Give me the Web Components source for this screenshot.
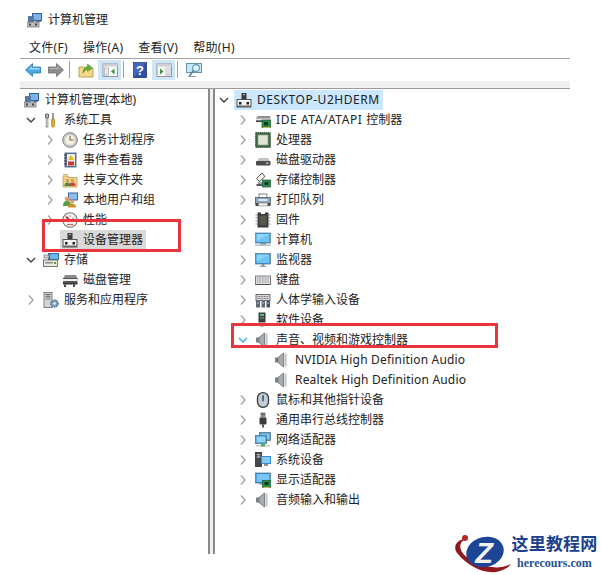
<!DOCTYPE html>
<html lang="zh">
<head>
<meta charset="utf-8">
<title>计算机管理</title>
<style>
  html, body { margin: 0; background: #fff; }
  body { font: 12px/20px "Noto Sans", "Noto Sans CJK SC", sans-serif; color: #222; }
</style>
</head>
<body>
<mmc-app>
  <mmc-title icon="mgmt">计算机管理</mmc-title>
  <mmc-menu>
    <span>文件(F)</span><span>操作(A)</span><span>查看(V)</span><span>帮助(H)</span>
  </mmc-menu>
  <mmc-toolbar>
    <tool-button icon="back"></tool-button>
    <tool-button icon="forward"></tool-button>
    <tool-sep></tool-sep>
    <tool-button icon="up"></tool-button>
    <tool-button icon="tree" active style="margin-left:1px"></tool-button>
    <tool-sep></tool-sep>
    <tool-button icon="help"></tool-button>
    <tool-button icon="actions" active style="margin-left:1px"></tool-button>
    <tool-sep></tool-sep>
    <tool-button icon="screen"></tool-button>
  </mmc-toolbar>
  <mmc-split>
    <tree-pane slot="left" style="padding-left:4px">
      <tree-row level="0" state="none" icon="mgmt">计算机管理(本地)</tree-row>
      <tree-row level="1" state="open" icon="tools">系统工具</tree-row>
      <tree-row level="2" icon="clock">任务计划程序</tree-row>
      <tree-row level="2" icon="events">事件查看器</tree-row>
      <tree-row level="2" icon="share">共享文件夹</tree-row>
      <tree-row level="2" icon="users">本地用户和组</tree-row>
      <tree-row level="2" icon="perf">性能</tree-row>
      <tree-row level="2" state="none" icon="device" selected="gray">设备管理器</tree-row>
      <tree-row level="1" state="open" icon="storage">存储</tree-row>
      <tree-row level="2" state="none" icon="disk2">磁盘管理</tree-row>
      <tree-row level="1" icon="services">服务和应用程序</tree-row>
    </tree-pane>
    <tree-pane slot="right" style="padding-left:2px">
      <tree-row level="1" state="open" icon="device" selected="blue"><span style="letter-spacing:.53px">DESKTOP-U2HDERM</span></tree-row>
      <tree-row level="2" icon="ide"><span style="letter-spacing:.57px">IDE ATA/ATAPI </span>控制器</tree-row>
      <tree-row level="2" icon="cpu">处理器</tree-row>
      <tree-row level="2" icon="drive">磁盘驱动器</tree-row>
      <tree-row level="2" icon="storctl">存储控制器</tree-row>
      <tree-row level="2" icon="printer">打印队列</tree-row>
      <tree-row level="2" icon="firmware">固件</tree-row>
      <tree-row level="2" icon="laptop">计算机</tree-row>
      <tree-row level="2" icon="monitor">监视器</tree-row>
      <tree-row level="2" icon="keyboard">键盘</tree-row>
      <tree-row level="2" icon="hid">人体学输入设备</tree-row>
      <tree-row level="2" icon="software">软件设备</tree-row>
      <tree-row level="2" state="hot" icon="speaker">声音、视频和游戏控制器</tree-row>
      <tree-row level="3" state="none" icon="speaker"><span style="letter-spacing:.18px">NVIDIA High Definition Audio</span></tree-row>
      <tree-row level="3" state="none" icon="speaker"><span style="letter-spacing:.18px">Realtek High Definition Audio</span></tree-row>
      <tree-row level="2" icon="mouse">鼠标和其他指针设备</tree-row>
      <tree-row level="2" icon="usb">通用串行总线控制器</tree-row>
      <tree-row level="2" icon="network">网络适配器</tree-row>
      <tree-row level="2" icon="system">系统设备</tree-row>
      <tree-row level="2" icon="display">显示适配器</tree-row>
      <tree-row level="2" icon="speaker">音频输入和输出</tree-row>
    </tree-pane>
  </mmc-split>
  <red-box style="left:42px;top:219px;width:139px;height:33px"></red-box>
  <red-box style="left:231px;top:323px;width:267px;height:25px"></red-box>
  <site-mark></site-mark>
</mmc-app>

<script>
// all icons share a 16x16 box
const ICONS = {
  mgmt: `<rect x="5" y="1" width="10" height="8" fill="#2f5f9e"/><rect x="6" y="2" width="8" height="6" fill="#7fb2e8"/><rect x="1" y="4" width="6" height="6" fill="#56789e"/><rect x="0" y="10" width="12" height="5" fill="#b9bcc0" stroke="#6a6d70" stroke-width=".7"/><rect x="2" y="11.5" width="2" height="2" fill="#444"/><rect x="8" y="11.5" width="2" height="2" fill="#444"/><rect x="9" y="9" width="5" height="1" fill="#777"/>`,
  tools: `<path d="M4 1v3.500M2.500 2v3l1.500 1.500 1.500-1.500V2" fill="none" stroke="#666" stroke-width="1.100"/><rect x="3.200" y="6" width="1.700" height="9" fill="#fff" stroke="#777" stroke-width=".8"/><rect x="9" y="1" width="2" height="6" fill="#9a9a9a"/><rect x="8.500" y="7" width="3" height="8" rx="1" fill="#e8a820" stroke="#a87510" stroke-width=".6"/>`,
  clock: `<circle cx="8" cy="8" r="7.300" fill="#d8d8d2" stroke="#777" stroke-width="1"/><circle cx="8" cy="8" r="5.400" fill="#f4f1e2" stroke="#aaa" stroke-width=".6"/><path d="M8 4v4h3.500" fill="none" stroke="#7a6a3a" stroke-width="1.100"/>`,
  events: `<rect x="3" y="1" width="11" height="14" fill="#5a7fa8" stroke="#3d5a7a" stroke-width=".8"/><rect x="5" y="2" width="8" height="12" fill="#f0ede0"/><path d="M2 3h3M2 6h3M2 9h3M2 12h3" stroke="#444" stroke-width="1"/><path d="M9 3l3 5H6z" fill="#e8b820"/><rect x="6" y="9.500" width="6" height="4" fill="#c83c30"/>`,
  share: `<path d="M1 4h5l1 1.500h8V15H1z" fill="#f0d78a" stroke="#b89a4a" stroke-width=".8"/><path d="M1 2.500h4l1 1" fill="none" stroke="#b89a4a" stroke-width=".8"/><circle cx="5.500" cy="8.500" r="1.800" fill="#d89a60"/><path d="M2.500 14c0-3 1.500-3.500 3-3.500s3 .5 3 3.500z" fill="#4a8a4a"/><circle cx="10.500" cy="8.500" r="1.800" fill="#d89a60"/><path d="M7.500 14c0-3 1.500-3.500 3-3.500s3 .5 3 3.500z" fill="#c04a40"/>`,
  users: `<rect x="6" y="0.500" width="10" height="8" fill="#3a639a"/><rect x="7" y="1.500" width="8" height="6" fill="#8fbdea"/><circle cx="5" cy="7" r="2.300" fill="#d8a070"/><path d="M1 14c0-4 2-5 4-5s4 1 4 5z" fill="#5a9a40"/><circle cx="10" cy="9.500" r="2.100" fill="#d8a070"/><path d="M6 15.500c0-3 2-3.800 4-3.800s4 .8 4 3.800z" fill="#c8902a"/>`,
  perf: `<circle cx="8" cy="8" r="7.200" fill="#f6f4f0" stroke="#777" stroke-width="1.100"/><path d="M3.500 5.500l2.500 1.500M12.500 5.500L10 7M8 3v2" stroke="#999" stroke-width=".9"/><path d="M4 4.500L9 9" stroke="#c8201c" stroke-width="1.400"/><path d="M5 12.500h6" stroke="#c86a60" stroke-width="1.300"/>`,
  device: `<rect x="5.500" y="1" width="5" height="6.500" fill="#3c3c3c"/><rect x="7" y="2" width="2" height="1.200" fill="#aaa"/><rect x="1" y="7.500" width="14" height="7.500" fill="#f4f4f4" stroke="#555" stroke-width="1"/><rect x="3" y="10" width="2.500" height="2.500" fill="#222"/><rect x="10.500" y="10" width="2.500" height="2.500" fill="#222"/><rect x="1" y="13.500" width="14" height="1.500" fill="#666"/>`,
  disk2: `<path d="M1 7l2-4h11l1.500 4z" fill="#8a8a8a"/><rect x="1" y="6" width="14.500" height="5" fill="#555"/><rect x="1" y="7" width="14.500" height="2" fill="#f0f0f0"/><rect x="1" y="11" width="14.500" height="1.500" fill="#333"/><rect x="2" y="12.500" width="2" height="2.500" fill="#444"/><rect x="11" y="12.500" width="2" height="2.500" fill="#444"/>`,
  storage: `<rect x="5" y="1" width="11" height="7" fill="#2f6ea8"/><rect x="7" y="2" width="8" height="5" fill="#6fb8e8"/><rect x="1" y="3" width="5" height="3" fill="#d0d4d8" stroke="#666" stroke-width=".6"/><rect x="0.500" y="8" width="14" height="6.500" fill="#eceae0" stroke="#6a6a60" stroke-width=".9"/><rect x="2" y="10" width="8" height="1.500" fill="#8a8a80"/><rect x="11" y="10" width="2" height="2" fill="#58a040"/>`,
  services: `<rect x="1" y="0.500" width="8" height="15" fill="#d2d4d6" stroke="#777" stroke-width=".9"/><rect x="2.500" y="2" width="5" height="1.200" fill="#666"/><rect x="2.500" y="4.200" width="5" height="1.200" fill="#666"/><rect x="2.500" y="6.400" width="5" height="1.200" fill="#888"/><circle cx="11.500" cy="11.500" r="3.600" fill="#7f9fbe" stroke="#51708f" stroke-width="1.300" stroke-dasharray="1.500 .8"/><circle cx="11.500" cy="11.500" r="1.300" fill="#e8eef4"/>`,
  ide: `<path d="M1 6l2-2h12l.5 2v3H1z" fill="#8f8f8f"/><rect x="1" y="6.500" width="14.500" height="2" fill="#e8e8e8"/><rect x="1" y="8.500" width="9" height="1.500" fill="#444"/><rect x="7" y="8" width="8.500" height="7.500" fill="#2d8a50" stroke="#1a5a30" stroke-width=".7"/><rect x="9" y="10" width="4" height="3.500" fill="#153a22"/><path d="M8 15.500h7" stroke="#d8b840" stroke-width="1"/>`,
  cpu: `<rect x="0.700" y="0.700" width="14.600" height="14.600" fill="#3f6a42" stroke="#2e4a30" stroke-width="1" stroke-dasharray="1.400 .6"/><rect x="3" y="3" width="10" height="10" fill="#dfe4d6" stroke="#95a090" stroke-width=".7"/>`,
  drive: `<path d="M2 9l2-3h9l2 3z" fill="#c2c2c2"/><rect x="1" y="9" width="14.500" height="4.500" rx="1" fill="#4c4c4c"/><rect x="11" y="10.500" width="2.500" height="1.200" fill="#d8d8d8"/>`,
  storctl: `<path d="M7 1L1.500 6.500l3 3 5.500-5z" fill="#f0f0ee" stroke="#444" stroke-width=".9"/><path d="M3 11h5" stroke="#666" stroke-width="1.200"/><path d="M1.500 13h6" stroke="#222" stroke-width="1.500"/><rect x="7.500" y="8" width="8" height="7" fill="#2d8a50" stroke="#1a5a30" stroke-width=".7"/><rect x="9.500" y="10" width="4" height="3" fill="#153a22"/>`,
  printer: `<rect x="4" y="2" width="8" height="4" fill="#fafafa" stroke="#666" stroke-width=".8"/><rect x="0.500" y="5.500" width="15" height="6" fill="#8ea4b8" stroke="#4e5f70" stroke-width=".8"/><rect x="3.500" y="7" width="9" height="2" fill="#dce6f0"/><rect x="0.500" y="11" width="3" height="3" fill="#454545"/><rect x="12.500" y="11" width="3" height="3" fill="#454545"/><rect x="3.500" y="11" width="9" height="3" fill="#f0f0f0" stroke="#777" stroke-width=".6"/>`,
  firmware: `<path d="M2.500 0.500h3.500v1.500h4V.5h3.500v15H2.500z" fill="#3a3a3a"/><rect x="4.500" y="3.500" width="7" height="10" fill="#585850"/><path d="M2 3h-1.500M2 6h-1.500M2 9h-1.500M2 12h-1.500M14 3h1.500M14 6h1.500M14 9h1.500M14 12h1.500" stroke="#888" stroke-width="1"/>`,
  laptop: `<rect x="0.500" y="1" width="15" height="10" fill="#2b8fd8" stroke="#6a8aa0" stroke-width=".8"/><rect x="1.500" y="2" width="13" height="8" fill="#6cc4f4"/><path d="M1.500 2h13l-13 7z" fill="#a4dcf8" opacity=".6"/><rect x="0" y="12.500" width="16" height="1.500" fill="#b8c0c8"/><rect x="5" y="11" width="6" height="1.500" fill="#8a949c"/>`,
  monitor: `<rect x="0.500" y="1.500" width="15" height="10.500" fill="#2b8fd8" stroke="#607f94" stroke-width=".8"/><rect x="1.500" y="2.500" width="13" height="8.500" fill="#6cc4f4"/><path d="M1.500 2.500h13l-13 7z" fill="#a4dcf8" opacity=".6"/><rect x="6.500" y="12" width="3" height="2" fill="#8a949c"/><rect x="4.500" y="14" width="7" height="1" fill="#9aa4ac"/>`,
  keyboard: `<rect x="0.500" y="4" width="15" height="8.500" fill="#dfe1e3" stroke="#73777a" stroke-width=".9"/><path d="M2 6h12M2 8h12M2 10h12" stroke="#8a8e92" stroke-width="1" stroke-dasharray="1 .6"/><rect x="0.500" y="12" width="15" height="1" fill="#555"/>`,
  hid: `<rect x="1" y="2.500" width="14" height="6" fill="#d8dadc" stroke="#5c6064" stroke-width=".9"/><path d="M2.500 4.500h11M2.500 6.500h11" stroke="#6a6e72" stroke-width="1" stroke-dasharray="1 .6"/><path d="M1 9h4v6.500H1zM6.500 9h3.500v6.500H6.500z" fill="#5f6a78"/><path d="M11.500 9H15v6.500h-3.500z" fill="#48525e"/><path d="M2 11h2M7.500 11h1.500M12.500 11h1.500" stroke="#c4ccd4" stroke-width="1"/>`,
  software: `<rect x="3.500" y="0.500" width="7" height="10" fill="#3a3f3a"/><rect x="5" y="2" width="4" height="2" fill="#5ab88a"/><rect x="5" y="5.500" width="4" height="1" fill="#999"/><rect x="1.500" y="11" width="11" height="1.500" fill="#222"/><rect x="5.500" y="12.500" width="3" height="2" fill="#555"/>`,
  speaker: `<path d="M1 5.500h3v5H1z" fill="#7e8284"/><path d="M4 5.500L9.500 1v14L4 10.500z" fill="#a8acae" stroke="#6c7072" stroke-width=".8"/><path d="M11.500 1.500v13" stroke="#c4c6c8" stroke-width="2.200"/>`,
  mouse: `<rect x="2.500" y="0.700" width="11" height="14.600" rx="5.400" fill="#c6ccd2" stroke="#33383d" stroke-width="1.300"/><rect x="7" y="3" width="2" height="6.500" rx="1" fill="#4a6e92"/>`,
  usb: `<rect x="5.500" y="0.500" width="5" height="5" fill="#8a8e92"/><rect x="6.500" y="1.500" width="1" height="1.500" fill="#333"/><rect x="8.500" y="1.500" width="1" height="1.500" fill="#333"/><rect x="4.500" y="5.500" width="7" height="7" rx="1" fill="#3a3c3e"/><path d="M7 12.500h2v3H7z" fill="#555"/>`,
  network: `<rect x="4.500" y="0.500" width="11" height="8" fill="#3b8ccf" stroke="#5b7890" stroke-width=".8"/><rect x="5.500" y="1.500" width="9" height="6" fill="#7ccaf4"/><rect x="0.500" y="3.500" width="11" height="8" fill="#3b8ccf" stroke="#5b7890" stroke-width=".8"/><rect x="1.500" y="4.500" width="9" height="6" fill="#8dd4f8"/><rect x="1" y="13" width="14" height="1.500" fill="#c8ccd0"/><rect x="6" y="11.500" width="4" height="3" fill="#4fb060"/>`,
  system: `<rect x="0.500" y="0.500" width="6" height="14" fill="#45494d" stroke="#2c2f32" stroke-width=".8"/><rect x="1.800" y="2" width="3.400" height="1.300" fill="#bfc4c8"/><rect x="1.800" y="4.300" width="3.400" height="1.300" fill="#bfc4c8"/><rect x="6" y="4" width="10" height="8" fill="#3b8ccf"/><rect x="7" y="5" width="8" height="6" fill="#80ccf4"/><rect x="9" y="12" width="4" height="2" fill="#8a949c"/>`,
  display: `<rect x="0.500" y="1" width="15" height="10" fill="#2b80c8" stroke="#607f94" stroke-width=".8"/><rect x="1.500" y="2" width="13" height="8" fill="#74c6f4"/><rect x="4" y="11" width="5" height="1.500" fill="#8a949c"/><rect x="7.500" y="8.500" width="8" height="7" fill="#2d8a50" stroke="#1a5a30" stroke-width=".7"/><rect x="9.500" y="10" width="4" height="3" fill="#153a22"/><path d="M8.500 15.500h6" stroke="#d8b840" stroke-width="1"/>`,
  back: `<path d="M0.500 8L7.500 1.500V5H15.500V11H7.500V14.500z" fill="#4aa8e4" stroke="#2a78b4" stroke-width=".8"/><path d="M3 8L7 4.500V6h7.500v1.500H4z" fill="#a4dafa"/>`,
  forward: `<path d="M15.500 8L8.500 1.500V5H.5V11H8.500V14.500z" fill="#8b8d8f" stroke="#6a6c6e" stroke-width=".8"/><path d="M1.500 6h7.500V4l3 3H1.500z" fill="#b4b6b8"/>`,
  up: `<path d="M1 5h5l1.500 1.500H15V15H1z" fill="#f4d888" stroke="#b89a50" stroke-width=".9"/><path d="M5 11c0-4 2-6 4.500-6.500V2l5 4-5 3.500V7C8 7.500 6.500 9 5 11z" fill="#62b030" stroke="#3f8420" stroke-width=".5"/>`,
  tree: `<rect x="1" y="2" width="14.500" height="12.500" fill="#f6f8f6" stroke="#8a8e92" stroke-width=".9"/><rect x="1" y="2" width="14.500" height="2.500" fill="#cdd0d2"/><rect x="2.500" y="6" width="4" height="7" fill="#fff" stroke="#a0a4a8" stroke-width=".7"/><path d="M3.500 8h2M3.500 10h2M3.500 12h2" stroke="#a0a4a8" stroke-width=".7"/><path d="M12.500 6.500v6L9 9.500z" fill="#4a8a46"/>`,
  actions: `<rect x="1" y="2" width="14.500" height="12.500" fill="#f6f8f6" stroke="#8a8e92" stroke-width=".9"/><rect x="1" y="2" width="14.500" height="2.500" fill="#cdd0d2"/><rect x="10" y="6" width="4" height="7" fill="#fff" stroke="#a0a4a8" stroke-width=".7"/><path d="M11 8h2M11 10h2M11 12h2" stroke="#a0a4a8" stroke-width=".7"/><path d="M4 6.500v6l3.500-3z" fill="#4a8a46"/>`,
  help: `<rect x="1.500" y="0.500" width="13" height="15" fill="#2f4fa8" stroke="#20357a" stroke-width=".8"/><path d="M1.500 .5h13l-13 15z" fill="#5f7fd0" opacity=".5"/><text x="8" y="13" text-anchor="middle" font-family="Liberation Sans" font-weight="700" font-size="13" fill="#fff">?</text>`,
  screen: `<rect x="0.500" y="1.500" width="15" height="9" fill="#c8e8f8" stroke="#5a8aa4" stroke-width=".9"/><circle cx="10" cy="6" r="3.400" fill="#e8f6fc" stroke="#5a98b8" stroke-width="1.100"/><path d="M7.500 8.500L3.500 14" stroke="#6a7a84" stroke-width="1.600"/><path d="M2 14.500h8" stroke="#8a9aa4" stroke-width="1"/>`
};

function iconSvg(name, size) {
  return `<svg width="${size}" height="${size}" viewBox="0 0 16 16" aria-hidden="true" style="display:block">${ICONS[name] || ""}</svg>`;
}

// small helper, every element below only differs in its html
function shadow(el, html) {
  const root = el.attachShadow({ mode: "open" });
  root.innerHTML = html;
  return root;
}

customElements.define("mmc-app", class extends HTMLElement {
  connectedCallback() {
    shadow(this, `
      <style>
        :host { display: block; position: relative; width: 601px; height: 575px; overflow: hidden; }
      </style>
      <slot></slot>`);
  }
});

customElements.define("mmc-title", class extends HTMLElement {
  connectedCallback() {
    shadow(this, `
      <style>
        :host { display: flex; align-items: center; gap: 5px; height: 40px; padding-left: 27px; }
      </style>
      ${iconSvg(this.getAttribute("icon"), 16)}<slot></slot>`);
  }
});

customElements.define("mmc-menu", class extends HTMLElement {
  connectedCallback() {
    shadow(this, `
      <style>
        :host { display: flex; align-items: center; gap: 15px; height: 16px; padding: 0 0 2px 29px; letter-spacing: .3px; }
        ::slotted(span) { display: block; }
      </style>
      <slot></slot>`);
  }
});

customElements.define("mmc-toolbar", class extends HTMLElement {
  connectedCallback() {
    shadow(this, `
      <style>
        :host { display: flex; align-items: stretch; box-sizing: border-box; width: 550px; height: 31px; margin-left: 20px;
                padding: 1px 0 8px 1px; border-top: 1px solid #a3a3a3; border-bottom: 1px solid #9a9a9a;
                background: linear-gradient(#fff 0 22px, #f0f0f0 22px); }
      </style>
      <slot></slot>`);
  }
});

customElements.define("tool-button", class extends HTMLElement {
  connectedCallback() {
    shadow(this, `
      <style>
        :host { display: flex; align-items: center; justify-content: center; width: 23px; box-sizing: border-box; }
        :host([active]) { background: #cfe6f8; }
      </style>
      ${iconSvg(this.getAttribute("icon"), 16)}`);
  }
});

customElements.define("tool-sep", class extends HTMLElement {
  connectedCallback() {
    shadow(this, `<style>:host { display: block; width: 1px; margin: 1px 4px 2px 2px; background: #a0a0a0; }</style>`);
  }
});

customElements.define("mmc-split", class extends HTMLElement {
  connectedCallback() {
    shadow(this, `
      <style>
        :host { display: grid; grid-template-columns: 188px 7px 355px; width: 550px; height: 465px; margin-left: 20px; }
        .bar { background: #efefef; border-left: 2px solid #8a8a8a; border-right: 2px solid #8a8a8a; }
      </style>
      <slot name="left"></slot><div class="bar"></div><slot name="right"></slot>`);
  }
});

customElements.define("tree-pane", class extends HTMLElement {
  connectedCallback() {
    shadow(this, `
      <style>
        :host { display: flex; flex-direction: column; min-width: 0; padding-top: 1px; background: #fff; }
      </style>
      <slot></slot>`);
  }
});

const CHEVRONS = {
  closed: `<path d="M5 3.500L9 8l-4 4.500" fill="none" stroke="#a6a6a6" stroke-width="1.400"/>`,
  open: `<path d="M3 6l4 4 4-4" fill="none" stroke="#404040" stroke-width="1.400"/>`,
  hot: `<path d="M3 6l4 4 4-4" fill="none" stroke="#3fb0dc" stroke-width="1.500"/>`,
  none: ""
};

customElements.define("tree-row", class extends HTMLElement {
  connectedCallback() {
    const level = Number(this.getAttribute("level") || 1);
    const state = this.getAttribute("state") || "closed";
    const chevron = level === 0 ? "" :
      `<svg class="chev" width="14" height="16" viewBox="0 0 14 16">${CHEVRONS[state]}</svg>`;
    shadow(this, `
      <style>
        :host { display: flex; align-items: center; flex: none; height: 20px; white-space: nowrap;
                padding-left: ${Math.max(level - 1, 0) * 19}px; }
        .chev { flex: none; width: 14px; margin-right: 5px; }
        .item { display: flex; align-items: center; gap: 5px; height: 20px; margin-left: -2px; padding: 0 3px 0 2px; }
        :host([selected="gray"]) .item { background: #d9d9d9; }
        :host([selected="blue"]) .item { background: #cce8ff; }
      </style>
      ${chevron}<div class="item">${iconSvg(this.getAttribute("icon"), 16)}<span><slot></slot></span></div>`);
  }
});

customElements.define("red-box", class extends HTMLElement {
  connectedCallback() {
    shadow(this, `<style>:host { display: block; position: absolute; box-sizing: border-box; border: 3px solid #e8363f; }</style>`);
  }
});

customElements.define("site-mark", class extends HTMLElement {
  connectedCallback() {
    shadow(this, `
      <style>
        :host { display: flex; align-items: flex-start; position: absolute; left: 452px; top: 534px; width: 149px; height: 41px; }
        svg { flex: none; overflow: visible; }
        .text { display: flex; flex-direction: column; align-items: center; width: 87px; margin-left: 1px; }
        .name { font: 700 17px/22px "Liberation Serif", "Noto Sans CJK SC", serif; letter-spacing: .2px; color: #1c3f8e; }
        .url { font: 700 12px/14px "Liberation Serif", serif; color: #24518f; }
      </style>
      <svg width="58" height="41" viewBox="0 0 58 41">
        <path d="M14 5C4 5 0 14 6 20c8 10 24 20 38 18 6-1 12-4 15-8-7 3-13 4-19 3C28 32 12 24 9 16 7 11 9 7 14 5z" fill="#8f1a1e"/>
        <circle cx="13" cy="4" r="3" fill="#b3262a"/>
        <ellipse cx="33" cy="18" rx="19" ry="15" transform="rotate(-15 33 18)" fill="#1c4596"/>
        <text x="32" y="29" text-anchor="middle" font-family="Liberation Sans" font-weight="700" font-style="italic" font-size="29" fill="#f2f2f2">Z</text>
      </svg>
      <div class="text"><span class="name">这里教程网</span><span class="url">herecours.com</span></div>`);
  }
});
</script>
</body>
</html>
